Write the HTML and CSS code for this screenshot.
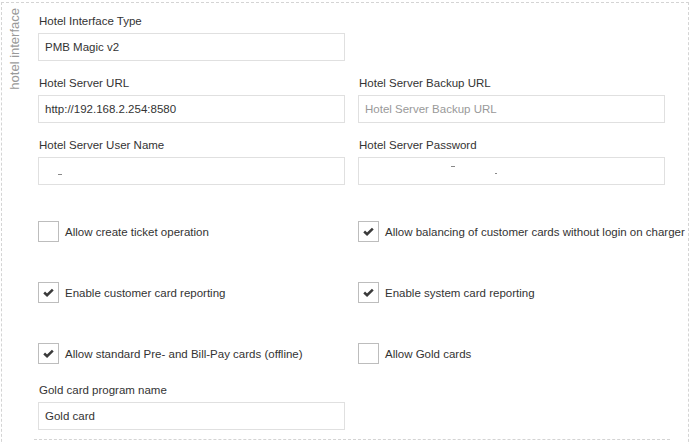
FILE: index.html
```html
<!DOCTYPE html>
<html>
<head>
<meta charset="utf-8">
<link rel="stylesheet" href="styles.css">
</head>
<body>
<div class="panel">
  <div class="legend"><span class="legend-text">hotel interface</span></div>
  <div class="content">
    <div class="row">
      <div class="field">
        <label class="lbl">Hotel Interface Type</label>
        <div class="input">PMB Magic v2</div>
      </div>
      <div class="field"></div>
    </div>
    <div class="row">
      <div class="field">
        <label class="lbl">Hotel Server URL</label>
        <div class="input">http://192.168.2.254:8580</div>
      </div>
      <div class="field">
        <label class="lbl">Hotel Server Backup URL</label>
        <div class="input placeholder">Hotel Server Backup URL</div>
      </div>
    </div>
    <div class="row">
      <div class="field">
        <label class="lbl">Hotel Server User Name</label>
        <div class="input redacted"><span class="mark m1"></span></div>
      </div>
      <div class="field">
        <label class="lbl">Hotel Server Password</label>
        <div class="input redacted"><span class="mark m2"></span><span class="mark m3"></span></div>
      </div>
    </div>
    <div class="checks">
      <div class="check"><span class="box"></span><span class="ctext">Allow create ticket operation</span></div>
      <div class="check"><span class="box"><svg viewBox="0 0 12 10" class="tick"><path d="M1.2 5 L4.4 8 L10.8 1.8" /></svg></span><span class="ctext">Allow balancing of customer cards without login on charger</span></div>
      <div class="check"><span class="box"><svg viewBox="0 0 12 10" class="tick"><path d="M1.2 5 L4.4 8 L10.8 1.8" /></svg></span><span class="ctext">Enable customer card reporting</span></div>
      <div class="check"><span class="box"><svg viewBox="0 0 12 10" class="tick"><path d="M1.2 5 L4.4 8 L10.8 1.8" /></svg></span><span class="ctext">Enable system card reporting</span></div>
      <div class="check"><span class="box"><svg viewBox="0 0 12 10" class="tick"><path d="M1.2 5 L4.4 8 L10.8 1.8" /></svg></span><span class="ctext">Allow standard Pre- and Bill-Pay cards (offline)</span></div>
      <div class="check"><span class="box"></span><span class="ctext">Allow Gold cards</span></div>
    </div>
    <div class="row gold">
      <div class="field">
        <label class="lbl">Gold card program name</label>
        <div class="input">Gold card</div>
      </div>
    </div>
    <div class="next-section"></div>
  </div>
</div>
</body>
</html>
```
FILE: styles.css
```css
* { box-sizing: border-box; }
html, body { margin: 0; padding: 0; background: #fff; }
body {
  font-family: "Liberation Sans", Arial, sans-serif;
  font-size: 11.5px;
  color: #333;
  width: 698px;
  height: 444px;
  overflow: hidden;
}
.panel {
  margin: 2px 0 0 1px;
  width: 688px;
  height: 460px;
  border: 1px dashed #d4d4d4;
  display: flex;
}
.legend {
  width: 36px;
  flex: none;
  padding: 5px 0 0 5px;
}
.legend-text {
  display: inline-block;
  writing-mode: vertical-rl;
  transform: rotate(180deg);
  color: #999;
  font-size: 13px;
  line-height: 15px;
}
.content {
  flex: 1;
  padding-top: 11px;
}
.row {
  display: grid;
  grid-template-columns: 307px 307px;
  column-gap: 13px;
  margin-bottom: 15px;
}
.lbl {
  display: block;
  line-height: 14px;
  margin-bottom: 5px;
  padding-left: 1px;
  color: #333;
}
.input {
  height: 28px;
  border: 1px solid #e0e0e0;
  padding: 0 6px;
  line-height: 26px;
  color: #333;
  position: relative;
}
.placeholder { color: #999; }
.redacted { background: #fff; }
.mark { position: absolute; background: #888; height: 1px; }
.m1 { left: 19px; top: 16px; width: 4px; }
.m2 { left: 92px; top: 8px; width: 4px; }
.m3 { left: 136px; top: 15px; width: 2px; }
.checks {
  display: grid;
  grid-template-columns: 307px 330px;
  column-gap: 13px;
  row-gap: 40px;
  padding-top: 21px;
}
.check {
  display: flex;
  align-items: center;
  height: 21px;
  white-space: nowrap;
}
.box {
  width: 21px;
  height: 21px;
  border: 1px solid #bdbdbd;
  background: #fff;
  display: flex;
  align-items: center;
  justify-content: center;
  flex: none;
  margin-right: 6px;
}
.tick {
  width: 11px;
  height: 9px;
}
.tick path {
  fill: none;
  stroke: #3a3a3a;
  stroke-width: 2.8;
  stroke-linecap: butt;
}
.ctext { color: #333; }
.gold { margin-top: 19px; margin-bottom: 0; }
.next-section {
  margin-top: 9px;
  margin-left: -4px;
  width: 636px;
  border-top: 1px dashed #d4d4d4;
}
```
